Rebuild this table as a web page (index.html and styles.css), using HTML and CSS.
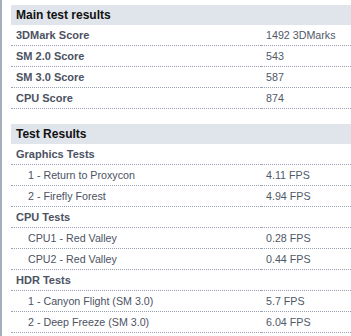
FILE: index.html
```html
<!DOCTYPE html>
<html>
<head>
<meta charset="utf-8">
<link rel="stylesheet" href="styles.css">
</head>
<body>
<div class="page">
  <table class="results">
    <colgroup><col class="col-label"><col class="col-value"></colgroup>
    <thead>
      <tr><th colspan="2">Main test results</th></tr>
    </thead>
    <tbody>
      <tr><td class="label">3DMark Score</td><td class="value">1492 3DMarks</td></tr>
      <tr><td class="label">SM 2.0 Score</td><td class="value">543</td></tr>
      <tr><td class="label">SM 3.0 Score</td><td class="value">587</td></tr>
      <tr><td class="label">CPU Score</td><td class="value">874</td></tr>
    </tbody>
  </table>

  <table class="results second">
    <colgroup><col class="col-label"><col class="col-value"></colgroup>
    <thead>
      <tr><th colspan="2">Test Results</th></tr>
    </thead>
    <tbody>
      <tr><td class="label">Graphics Tests</td><td class="value"></td></tr>
      <tr><td class="sub">1 - Return to Proxycon</td><td class="value">4.11 FPS</td></tr>
      <tr><td class="sub">2 - Firefly Forest</td><td class="value">4.94 FPS</td></tr>
      <tr><td class="label">CPU Tests</td><td class="value"></td></tr>
      <tr><td class="sub">CPU1 - Red Valley</td><td class="value">0.28 FPS</td></tr>
      <tr><td class="sub">CPU2 - Red Valley</td><td class="value">0.44 FPS</td></tr>
      <tr><td class="label">HDR Tests</td><td class="value"></td></tr>
      <tr><td class="sub">1 - Canyon Flight (SM 3.0)</td><td class="value">5.7 FPS</td></tr>
      <tr><td class="sub">2 - Deep Freeze (SM 3.0)</td><td class="value">6.04 FPS</td></tr>
    </tbody>
  </table>
</div>
</body>
</html>
```

FILE: styles.css
```css
html, body {
  margin: 0;
  padding: 0;
  background: #ffffff;
}

body {
  font-family: "Liberation Sans", Arial, sans-serif;
  font-size: 10.7px;
  color: #4c5262;
}

.page {
  border-left: 2px solid #a6aebc;
  min-height: 336px;
  box-sizing: border-box;
  padding: 5px 0 0 9px;
}

.results {
  border-collapse: separate;
  border-spacing: 0;
  width: 340px;
  table-layout: fixed;
}

.results .col-label {
  width: 250px;
}

.results .col-value {
  width: 90px;
}

.results.second {
  margin-top: 15px;
}

.results th {
  height: 20px;
  padding: 0 5px;
  background: #e0e4eb;
  color: #111111;
  font-size: 12px;
  font-weight: bold;
  text-align: left;
  vertical-align: middle;
}

.results td {
  height: 20px;
  padding: 0 5px;
  border-bottom: 1px dotted #97a1b0;
  vertical-align: middle;
  white-space: nowrap;
  overflow: hidden;
}

.results td.label {
  font-weight: bold;
  font-size: 11px;
}

.results td.sub {
  padding-left: 17px;
}

.results td.value {
  color: #505868;
}
```
